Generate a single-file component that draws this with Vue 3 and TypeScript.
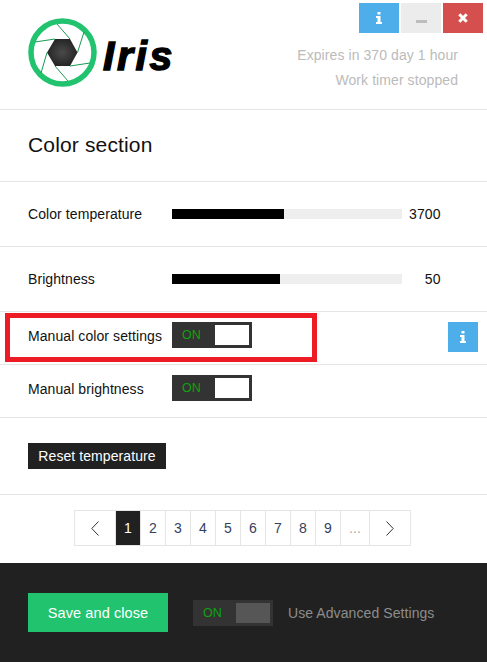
<script setup lang="ts">
const pages: string[] = ['2', '3', '4', '5', '6', '7', '8', '9']
</script>

<template>
  <div class="app">
    <header class="header">
      <div class="brand">
        <svg class="logo" width="70" height="70" viewBox="0 0 70 70">
          <defs>
            <radialGradient id="lens" cx="50%" cy="50%" r="55%">
              <stop offset="0%" stop-color="#4a4a4a" />
              <stop offset="100%" stop-color="#222" />
            </radialGradient>
          </defs>
          <circle cx="34.5" cy="34.5" r="31.5" fill="#fff" stroke="#22c36e" stroke-width="5.5" />
          <polygon points="19,34.5 27,21 42,21 49.5,34.5 42,48 27,48" fill="url(#lens)" />
          <g stroke="#179a55" stroke-width="1" fill="none">
            <line x1="27" y1="21" x2="7" y2="24" />
            <line x1="42" y1="21" x2="29" y2="6" />
            <line x1="49.5" y1="34.5" x2="56" y2="14" />
            <line x1="42" y1="48" x2="62" y2="45" />
            <line x1="27" y1="48" x2="40" y2="63" />
            <line x1="19" y1="34.5" x2="13" y2="55" />
          </g>
        </svg>
        <span class="wordmark">Iris</span>
      </div>
      <div class="status">
        <div class="window-buttons">
          <button class="win-btn win-info" aria-label="Info">
            <svg width="6" height="12" viewBox="0 0 6 12"><path d="M1.5 0h3v2.5h-3zM0 4h4.5v6H6v2H0v-2h1.5V6H0z" fill="#fff" /></svg>
          </button>
          <button class="win-btn win-min" aria-label="Minimize"><span class="min-bar"></span></button>
          <button class="win-btn win-close" aria-label="Close">
            <svg width="10" height="10" viewBox="0 0 10 10"><path d="M1.3 1.3l7.4 7.4M8.7 1.3l-7.4 7.4" stroke="#fff" stroke-width="3" /></svg>
          </button>
        </div>
        <p class="status-line first">Expires in 370 day 1 hour</p>
        <p class="status-line">Work timer stopped</p>
      </div>
    </header>

    <section class="title-row"><h1>Color section</h1></section>

    <section class="row slider-row">
      <span class="label">Color temperature</span>
      <div class="track"><div class="fill" style="width: 112px"></div></div>
      <span class="value">3700</span>
    </section>

    <section class="row slider-row">
      <span class="label">Brightness</span>
      <div class="track"><div class="fill" style="width: 108px"></div></div>
      <span class="value">50</span>
    </section>

    <section class="row toggle-row">
      <span class="label">Manual color settings</span>
      <div class="toggle"><span class="on">ON</span><span class="thumb"></span></div>
      <button class="row-info" aria-label="Info">
        <svg width="6" height="12" viewBox="0 0 6 12"><path d="M1.5 0h3v2.5h-3zM0 4h4.5v6H6v2H0v-2h1.5V6H0z" fill="#fff" /></svg>
      </button>
    </section>

    <section class="row toggle-row">
      <span class="label">Manual brightness</span>
      <div class="toggle"><span class="on">ON</span><span class="thumb"></span></div>
    </section>

    <section class="reset-row">
      <button class="reset">Reset temperature</button>
    </section>

    <nav class="pager-row">
      <div class="pager">
        <span class="cell arrow prev">
          <svg width="8" height="15" viewBox="0 0 8 15"><path d="M7.5 .5L.8 7.5l6.7 7" fill="none" stroke="#333" /></svg>
        </span>
        <span class="cell num active">1</span>
        <span v-for="p in pages" :key="p" class="cell num">{{ p }}</span>
        <span class="cell dots">...</span>
        <span class="cell arrow next">
          <svg width="8" height="15" viewBox="0 0 8 15"><path d="M.5 .5l6.7 7-6.7 7" fill="none" stroke="#333" /></svg>
        </span>
      </div>
    </nav>

    <footer class="footer">
      <button class="save">Save and close</button>
      <div class="toggle toggle-dark"><span class="on">ON</span><span class="thumb"></span></div>
      <span class="advanced">Use Advanced Settings</span>
    </footer>

    <div class="highlight"></div>
  </div>
</template>

<style>
html, body { margin: 0; background: #fff; }
</style>

<style scoped>
.app {
  position: relative;
  width: 487px;
  height: 662px;
  overflow: hidden;
  display: flex;
  flex-direction: column;
  background: #fff;
  font-family: "Liberation Sans", Arial, sans-serif;
  font-size: 14px;
  letter-spacing: 0.08px;
  color: #111;
}
button { font-family: inherit; letter-spacing: inherit; border: 0; padding: 0; cursor: pointer; }

.header {
  height: 110px;
  box-sizing: border-box;
  flex: none;
  display: flex;
  justify-content: space-between;
  border-bottom: 1px solid #e5e5e5;
}
.brand { display: flex; align-items: flex-start; padding: 18px 0 0 28px; }
.logo { display: block; }
.wordmark {
  margin: 15px 0 0 5px;
  font-size: 41px;
  line-height: 46px;
  font-weight: 700;
  font-style: italic;
  color: #000;
  -webkit-text-stroke: 1.4px #000;
  letter-spacing: 2.6px;
}
.status { display: flex; flex-direction: column; align-items: flex-end; padding: 3px 4px 0 0; }
.window-buttons { display: flex; gap: 2px; }
.win-btn { width: 40px; height: 30px; display: flex; align-items: center; justify-content: center; }
.win-info { background: #4daeea; }
.win-min { background: #ececec; }
.win-close { background: #d64f4f; }
.min-bar { width: 11px; height: 3px; background: #bdbdbd; margin-top: 6px; }
.status-line { margin: 0 25px 0 0; font-size: 14px; line-height: 16px; color: #bbb; }
.status-line.first { margin-top: 14px; margin-bottom: 9px; }

.title-row {
  height: 72px;
  box-sizing: border-box;
  flex: none;
  display: flex;
  align-items: center;
  padding: 0 0 2px 28px;
  border-bottom: 1px solid #e5e5e5;
}
h1 { margin: 0; font-size: 21px; font-weight: 400; letter-spacing: 0.15px; color: #111; }

.row {
  flex: none;
  box-sizing: border-box;
  display: flex;
  align-items: center;
  padding-left: 28px;
  border-bottom: 1px solid #e5e5e5;
}
.label { width: 144px; flex: none; line-height: 16px; white-space: nowrap; }
.slider-row { height: 65px; }
.track { width: 230px; height: 10px; background: #eee; flex: none; }
.fill { height: 100%; background: #000; }
.value { width: 38.5px; flex: none; text-align: right; }

.toggle-row { height: 53px; align-items: flex-start; padding-top: 10px; }
.toggle-row .label { margin-top: 6px; }
.toggle {
  width: 80px;
  height: 26px;
  box-sizing: border-box;
  padding: 3px;
  flex: none;
  display: flex;
  justify-content: space-between;
  align-items: stretch;
  background: #333;
}
.on { color: #0fa30f; font-size: 12.5px; line-height: 20px; padding-left: 7px; }
.thumb { width: 34px; background: #fff; }
.row-info {
  width: 30px;
  height: 30px;
  margin-left: auto;
  margin-right: 9px;
  display: flex;
  align-items: center;
  justify-content: center;
  background: #4daeea;
}

.reset-row {
  height: 77px;
  box-sizing: border-box;
  flex: none;
  padding: 25px 0 0 28px;
  border-bottom: 1px solid #e5e5e5;
}
.reset {
  display: block;
  width: 138px;
  height: 26px;
  background: #212121;
  color: #fff;
  font-size: 14px;
}

.pager-row {
  height: 68px;
  flex: none;
  box-sizing: border-box;
  padding: 15px 0 0 74px;
}
.pager {
  width: 337px;
  height: 36px;
  box-sizing: border-box;
  display: flex;
  border: 1px solid #e5e5e5;
}
.cell {
  display: flex;
  align-items: center;
  justify-content: center;
  flex: none;
  box-sizing: border-box;
  border-right: 1px solid #e5e5e5;
  color: #33415e;
}
.num { width: 25px; }
.prev { width: 41px; }
.next { width: 40px; border-right: 0; }
.dots { width: 29px; color: #aaa; }
.active { background: #212121; color: #fff; }

.footer {
  flex: 1;
  display: flex;
  align-items: center;
  padding: 0 0 0 28px;
  background: #212121;
}
.save {
  width: 140px;
  height: 39px;
  flex: none;
  background: #22c36e;
  color: #fff;
  font-size: 14.5px;
}
.toggle-dark { margin-left: 25px; background: #333; }
.toggle-dark .thumb { background: #565656; }
.advanced { margin-left: 15px; color: #8d8d8d; white-space: nowrap; }

.highlight {
  position: absolute;
  left: 5px;
  top: 313px;
  width: 312px;
  height: 49px;
  box-sizing: border-box;
  border: 5px solid #ed1c24;
  pointer-events: none;
}
</style>
